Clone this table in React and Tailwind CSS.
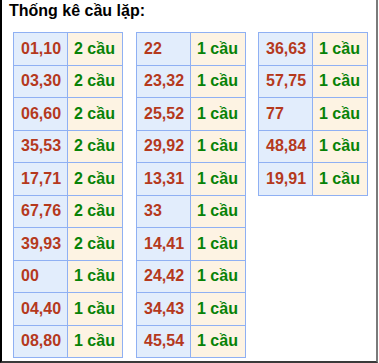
import React from 'react';

const cols = [
  [
    ['01,10', '2 cầu'],
    ['03,30', '2 cầu'],
    ['06,60', '2 cầu'],
    ['35,53', '2 cầu'],
    ['17,71', '2 cầu'],
    ['67,76', '2 cầu'],
    ['39,93', '2 cầu'],
    ['00', '1 cầu'],
    ['04,40', '1 cầu'],
    ['08,80', '1 cầu'],
  ],
  [
    ['22', '1 cầu'],
    ['23,32', '1 cầu'],
    ['25,52', '1 cầu'],
    ['29,92', '1 cầu'],
    ['13,31', '1 cầu'],
    ['33', '1 cầu'],
    ['14,41', '1 cầu'],
    ['24,42', '1 cầu'],
    ['34,43', '1 cầu'],
    ['45,54', '1 cầu'],
  ],
  [
    ['36,63', '1 cầu'],
    ['57,75', '1 cầu'],
    ['77', '1 cầu'],
    ['48,84', '1 cầu'],
    ['19,91', '1 cầu'],
  ],
];

const CauTable = ({ rows }) => (
  <div className="w-[110px] border-t border-l border-[#8fb0f3]">
    {rows.map(([pair, count]) => (
      <div key={pair} className="flex h-[32.5px]">
        <div className="w-[54px] flex items-center pl-[7px] bg-[#e2edfc] border-r border-b border-[#8fb0f3] text-[#b5391d]">
          {pair}
        </div>
        <div className="w-[55px] flex items-center pl-[6px] bg-[#fdf3e3] border-r border-b border-[#8fb0f3] text-[#078207]">
          {count}
        </div>
      </div>
    ))}
  </div>
);

export default function App() {
  return (
    <div
      className="w-[378px] h-[363px] bg-white border-l-2 border-l-black border-r-2 border-r-[#7a7a7a] border-b-2 border-b-[#3a3a3a] overflow-hidden font-bold text-[16px]"
      style={{ fontFamily: '"Liberation Sans", Arial, sans-serif' }}
    >
      <div className="pl-[7px] pt-[2px] h-[32px] text-black leading-[18px]">Thống kê cầu lặp:</div>
      <div className="flex items-start pl-[11px]">
        <CauTable rows={cols[0]} />
        <div className="ml-[13px]">
          <CauTable rows={cols[1]} />
        </div>
        <div className="ml-[12px]">
          <CauTable rows={cols[2]} />
        </div>
      </div>
    </div>
  );
}
